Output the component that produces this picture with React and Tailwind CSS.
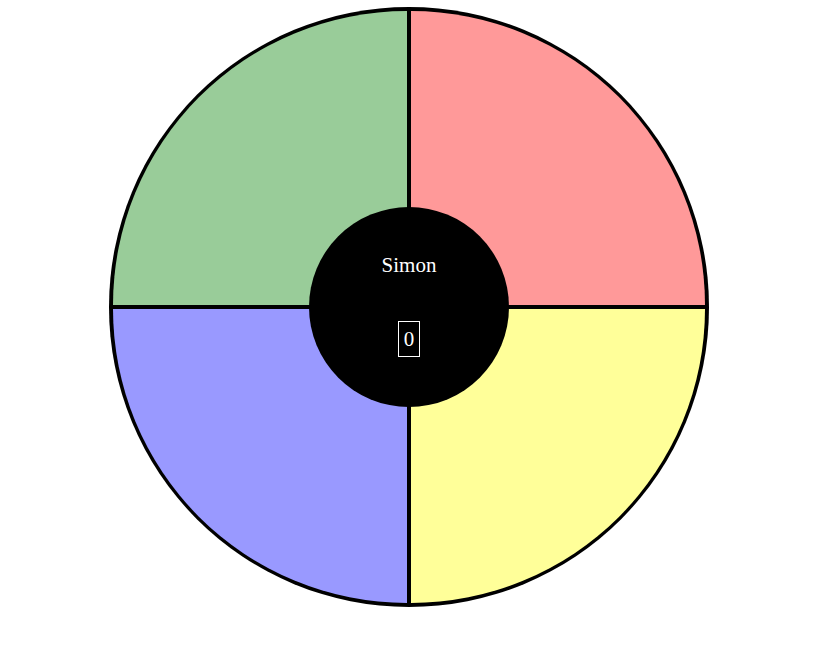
export default function App() {
  return (
    <div className="w-[837px] h-[659px] bg-white overflow-hidden">
      <div className="relative ml-[109px] mt-[7px] w-[600px] h-[600px] rounded-full bg-black p-[4px] grid grid-cols-2 gap-[4px]">
        <div className="bg-[#99cc99] rounded-tl-[294px]" />
        <div className="bg-[#ff9999] rounded-tr-[294px]" />
        <div className="bg-[#9999ff] rounded-bl-[294px]" />
        <div className="bg-[#ffff99] rounded-br-[294px]" />
        <div className="absolute left-[200px] top-[200px] w-[200px] h-[200px] rounded-full bg-black flex flex-col items-center text-white font-['Liberation_Serif',serif] text-[21px]">
          <div className="mt-[46px] leading-[24px]">Simon</div>
          <div className="mt-[44px] w-[22px] h-[36px] border border-white flex items-center justify-center leading-none">0</div>
        </div>
      </div>
    </div>
  );
}
